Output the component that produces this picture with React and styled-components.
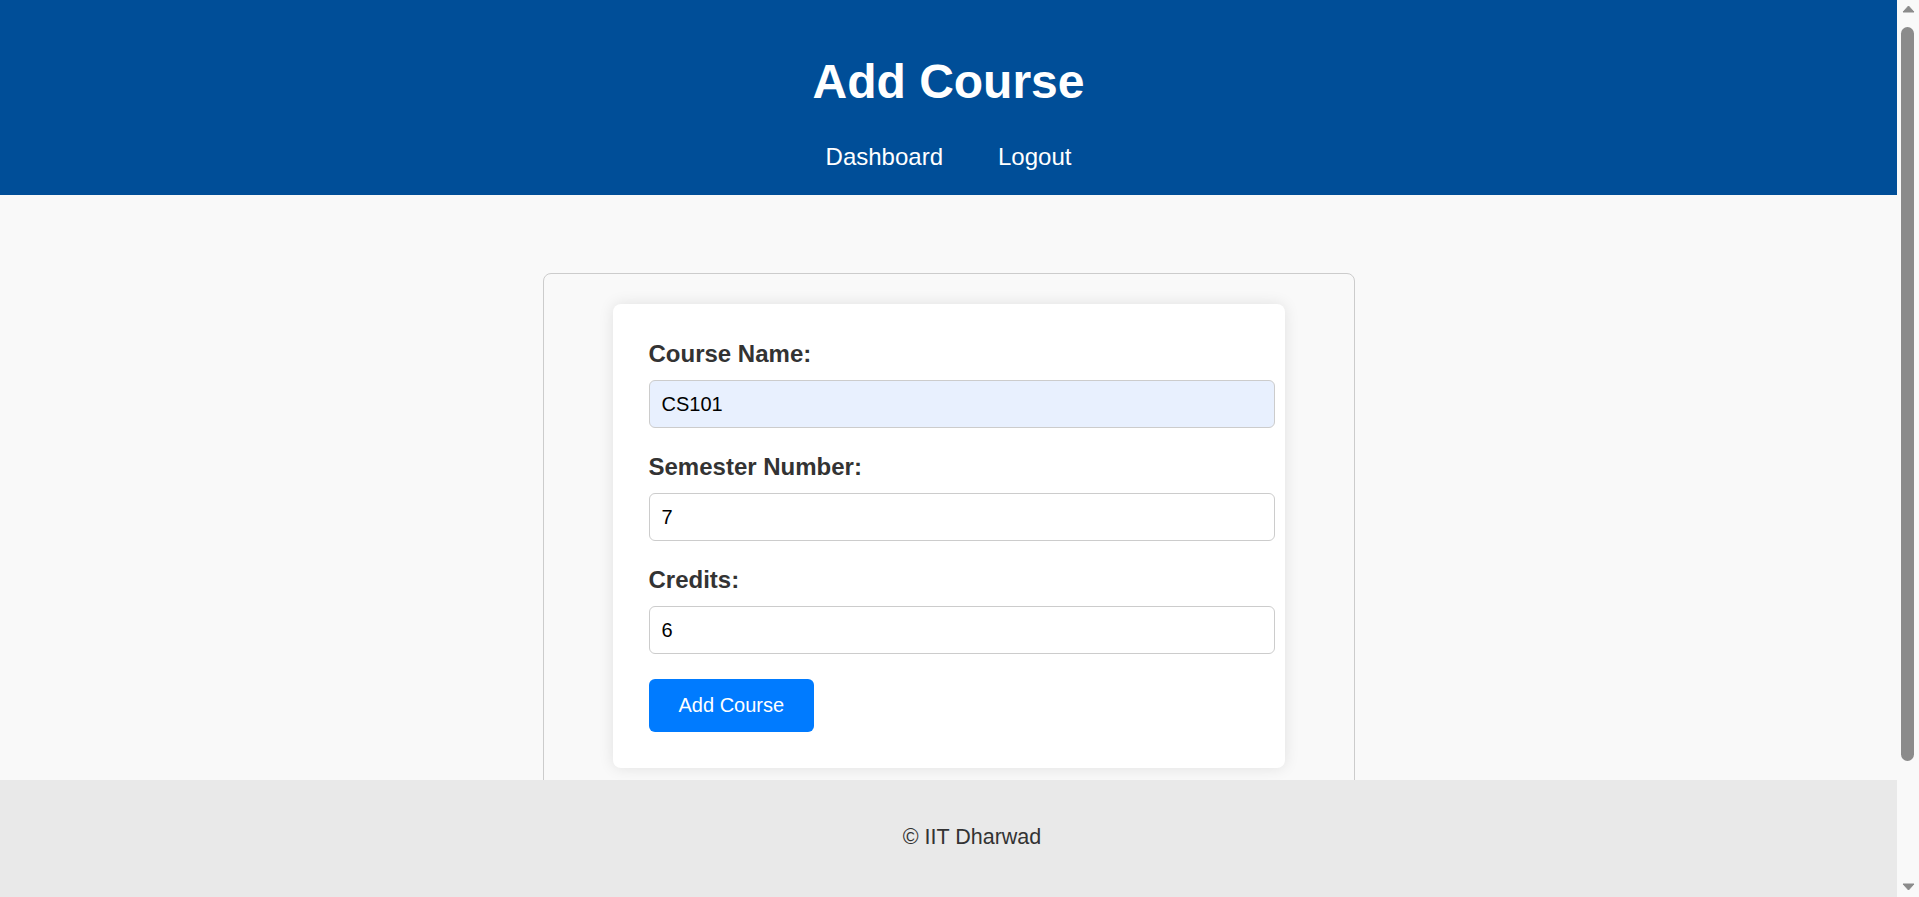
import React from "react";
import styled, { createGlobalStyle } from "styled-components";

const GlobalStyle = createGlobalStyle`
  html, body {
    margin: 0;
    padding: 0;
  }
  body {
    background: #f9f9f9;
    font-family: "Liberation Sans", Arial, sans-serif;
    margin-right: 22px;
  }
`;

const Header = styled.header`
  background: #004e98;
  color: #ffffff;
  text-align: center;
  padding: 54px 0 24px;
`;

const Title = styled.h1`
  margin: 0;
  font-size: 48px;
  font-weight: bold;
  line-height: normal;
`;

const Nav = styled.nav`
  margin-top: 34px;
  display: flex;
  justify-content: center;
  gap: 55px;
`;

const NavLink = styled.a`
  color: #ffffff;
  text-decoration: none;
  font-size: 24px;
  line-height: normal;
`;

const Main = styled.main`
  padding: 78px 0 256px;
`;

const Container = styled.div`
  box-sizing: border-box;
  width: 812px;
  margin: 0 auto;
  border: 1px solid #cccccc;
  border-radius: 8px;
  padding: 30px 0;
`;

const Card = styled.form`
  box-sizing: border-box;
  width: 672px;
  margin: 0 auto;
  background: #ffffff;
  border-radius: 8px;
  padding: 36px;
  box-shadow: 0 0 15px rgba(0, 0, 0, 0.1);
`;

const Group = styled.div`
  margin-bottom: 25px;
`;

const Label = styled.label`
  display: block;
  font-size: 24px;
  font-weight: bold;
  color: #333333;
  line-height: normal;
  margin-bottom: 12px;
`;

const Input = styled.input`
  display: block;
  box-sizing: content-box;
  width: 100%;
  height: 22px;
  padding: 12px;
  margin: 0;
  border: 1px solid #cccccc;
  border-radius: 6px;
  font-family: "Liberation Sans", Arial, sans-serif;
  font-size: 20px;
  color: #000000;
  background: ${(p) => (p.$filled ? "#e8f0fe" : "#ffffff")};
  outline: none;
`;

const Button = styled.button`
  display: block;
  padding: 15px 30px;
  border: none;
  border-radius: 6px;
  background: #007bff;
  color: #ffffff;
  font-family: "Liberation Sans", Arial, sans-serif;
  font-size: 20px;
  line-height: normal;
  cursor: pointer;
`;

const Footer = styled.footer`
  position: fixed;
  left: 0;
  right: 22px;
  bottom: 0;
  background: #e9e9e9;
  color: #333333;
  text-align: center;
  font-size: 21.5px;
  line-height: normal;
  padding: 45px 0 47px 47px;
`;

const ScrollTrack = styled.div`
  position: fixed;
  top: 0;
  right: 0;
  bottom: 0;
  width: 22px;
  background: #f9f9f9;
  display: flex;
  flex-direction: column;
  align-items: center;
`;

const ArrowButton = styled.div`
  height: 22px;
  width: 100%;
  display: flex;
  justify-content: center;
  align-items: ${(p) => (p.$down ? "flex-end" : "flex-start")};
  padding: ${(p) => (p.$down ? "0 0 6px" : "5px 0 0")};
  box-sizing: border-box;
`;

const ThumbArea = styled.div`
  flex: 1;
  width: 100%;
  display: flex;
  justify-content: center;
  padding-top: 5px;
`;

const Thumb = styled.div`
  width: 13px;
  height: 734px;
  border-radius: 7px;
  background: #8b8b8b;
  margin-left: -1px;
`;

const Arrow = ({ down }) => (
  <svg width="13" height="8" viewBox="0 0 13 8">
    <path
      d={down ? "M1 1 L12 1 L6.5 7 Z" : "M1 7 L12 7 L6.5 1 Z"}
      fill="#8b8b8b"
      stroke="#8b8b8b"
      strokeWidth="1"
      strokeLinejoin="round"
    />
  </svg>
);

const fields = [
  { id: "name", label: "Course Name:", value: "CS101", filled: true },
  { id: "sem", label: "Semester Number:", value: "7" },
  { id: "credits", label: "Credits:", value: "6" },
];

export default function App() {
  return (
    <>
      <GlobalStyle />
      <Header>
        <Title>Add Course</Title>
        <Nav>
          <NavLink href="#">Dashboard</NavLink>
          <NavLink href="#">Logout</NavLink>
        </Nav>
      </Header>
      <Main>
        <Container>
          <Card onSubmit={(e) => e.preventDefault()}>
            {fields.map((f) => (
              <Group key={f.id}>
                <Label htmlFor={f.id}>{f.label}</Label>
                <Input id={f.id} defaultValue={f.value} $filled={f.filled} />
              </Group>
            ))}
            <Button type="submit">Add Course</Button>
          </Card>
        </Container>
      </Main>
      <Footer>© IIT Dharwad</Footer>
      <ScrollTrack aria-hidden="true">
        <ArrowButton>
          <Arrow />
        </ArrowButton>
        <ThumbArea>
          <Thumb />
        </ThumbArea>
        <ArrowButton $down>
          <Arrow down />
        </ArrowButton>
      </ScrollTrack>
    </>
  );
}
